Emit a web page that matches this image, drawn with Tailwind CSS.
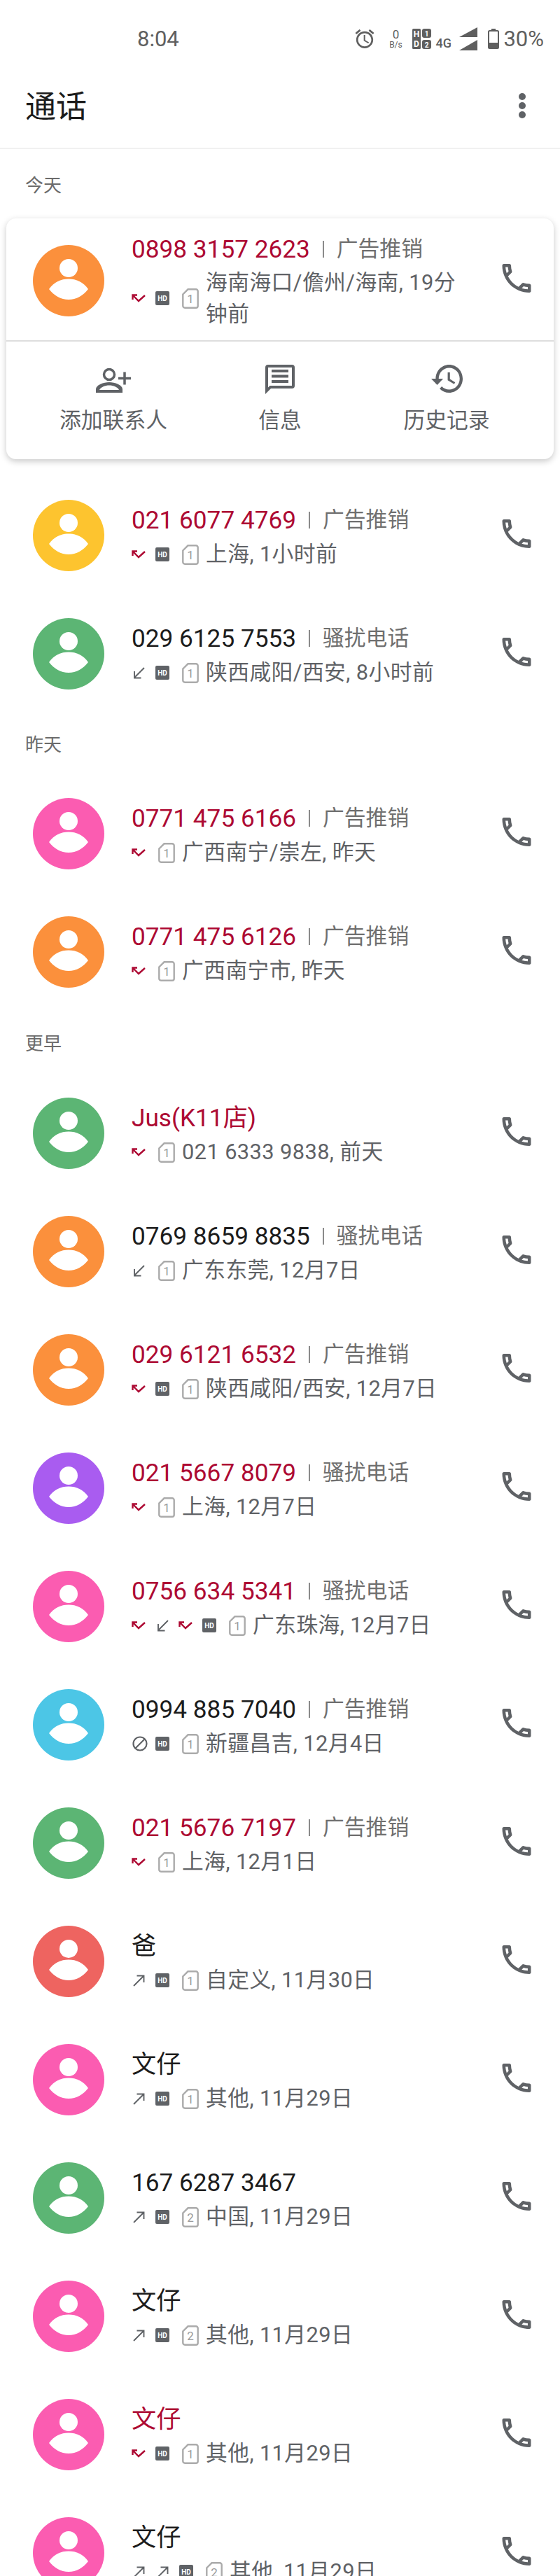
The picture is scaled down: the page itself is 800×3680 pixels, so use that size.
<!DOCTYPE html>
<html lang="zh">
<head>
<meta charset="utf-8">
<script src="https://cdn.jsdelivr.net/npm/@tailwindcss/browser@4"></script>
<title>通话</title>
</head>
<body class="bg-white">
<svg class="hidden" xmlns="http://www.w3.org/2000/svg">
  <symbol id="avatar" viewBox="0 0 102 102">
    <circle cx="51" cy="51" r="51" fill="currentColor"/>
    <circle cx="51" cy="33" r="13" fill="#fff"/>
    <path d="M23 63C30 53 40 48.500 51 48.500C62 48.500 72 53 79 63C72 72 62 78 51 78C40 78 30 72 23 63Z" fill="#fff"/>
  </symbol>
  <symbol id="phone" viewBox="3 3 18 18">
    <path fill="#5f6266" d="M6.540 5c.06.89.21 1.760.45 2.590l-1.200 1.200c-.41-1.200-.67-2.470-.76-3.790h1.510m9.860 12.020c.85.24 1.720.39 2.600.45v1.490c-1.320-.09-2.590-.35-3.800-.75l1.200-1.190M7.500 3H4c-.55 0-1 .45-1 1 0 9.390 7.610 17 17 17 .55 0 1-.45 1-1v-3.490c0-.55-.45-1-1-1-1.240 0-2.450-.2-3.570-.57-.1-.04-.21-.05-.31-.05-.26 0-.51.1-.71.29l-2.200 2.200c-2.830-1.450-5.150-3.760-6.590-6.590l2.200-2.200c.28-.28.36-.67.25-1.020C8.700 6.450 8.500 5.250 8.500 4c0-.55-.45-1-1-1z"/>
  </symbol>
  <symbol id="missed" viewBox="0 0 20 12">
    <path d="M1.500 1.500L10 10L19 2M1.500 8V1.500H8" fill="none" stroke="#ad0a33" stroke-width="2.400"/>
  </symbol>
  <symbol id="incoming" viewBox="0 0 17 17">
    <path d="M16 1L2 15M2 6V15.500H11.500" fill="none" stroke="#5f6266" stroke-width="1.900"/>
  </symbol>
  <symbol id="outgoing" viewBox="0 0 17 17">
    <path d="M1 16L15 2M5.500 1.500H15.500V11" fill="none" stroke="#5f6266" stroke-width="1.900"/>
  </symbol>
  <symbol id="blocked" viewBox="0 0 22 22">
    <circle cx="11" cy="11" r="9.500" fill="none" stroke="#5f6266" stroke-width="2.200"/>
    <path d="M4.500 17.500L17.500 4.500" stroke="#5f6266" stroke-width="2.200"/>
  </symbol>
  <symbol id="hd" viewBox="0 0 20 20">
    <rect width="20" height="20" rx="2" fill="#5f6266"/>
    <text x="10" y="13.500" text-anchor="middle" font-family="Roboto" font-size="10" font-weight="700" fill="#fff">HD</text>
  </symbol>
  <symbol id="sim1" viewBox="0 0 24 29">
    <path d="M8.500 1.300H20a2.700 2.700 0 0 1 2.700 2.700V25a2.700 2.700 0 0 1-2.700 2.700H4A2.700 2.700 0 0 1 1.300 25V8.500Z" fill="none" stroke="#ababab" stroke-width="2.400"/>
    <text x="12" y="21" text-anchor="middle" font-family="Roboto" font-size="17" fill="#9a9a9a">1</text>
  </symbol>
  <symbol id="sim2" viewBox="0 0 24 29">
    <path d="M8.500 1.300H20a2.700 2.700 0 0 1 2.700 2.700V25a2.700 2.700 0 0 1-2.700 2.700H4A2.700 2.700 0 0 1 1.300 25V8.500Z" fill="none" stroke="#ababab" stroke-width="2.400"/>
    <text x="12" y="21" text-anchor="middle" font-family="Roboto" font-size="17" fill="#9a9a9a">2</text>
  </symbol>
</svg>

<div class="w-[800px] h-[3680px] overflow-hidden bg-white font-[Roboto,'Noto_Sans_CJK_SC',sans-serif] text-[#1c1c1c]">

  <!-- status bar -->
  <div class="h-[88px] flex items-center pt-[22px] pl-[196px] pr-[23px] text-[#5f5f5f]">
    <span class="text-[31px] leading-none">8:04</span>
    <div class="ml-auto flex items-center">
      <svg class="w-[28px] h-[27px]" viewBox="2 2 20 20"><path fill="#5f5f5f" d="M22 5.720l-4.600-3.860-1.290 1.530 4.600 3.860L22 5.720zM7.880 3.390L6.600 1.860 2 5.710l1.290 1.530 4.590-3.850zM12.500 8H11v6l4.750 2.850.75-1.230-4-2.370V8zM12 4c-4.970 0-9 4.030-9 9s4.030 9 9 9 9-4.030 9-9-4.030-9-9-9zm0 16c-3.870 0-7-3.130-7-7s3.130-7 7-7 7 3.130 7 7-3.130 7-7 7z"/></svg>
      <div class="ml-[20px] w-[20px] flex flex-col items-center">
        <span class="text-[17px] leading-[18px]">0</span>
        <span class="text-[12px] leading-[13px]">B/s</span>
      </div>
      <svg class="ml-[14px] w-[27px] h-[29px]" viewBox="0 0 27 29">
        <rect x="0" y="0" width="12" height="29" rx="1.500" fill="#5f5f5f"/>
        <rect x="14" y="0" width="13" height="13" rx="3" fill="#5f5f5f"/>
        <rect x="14" y="16" width="13" height="13" rx="3" fill="#5f5f5f"/>
        <text x="6" y="11.500" text-anchor="middle" font-family="Roboto" font-size="12" font-weight="700" fill="#fff">H</text>
        <text x="6" y="25.500" text-anchor="middle" font-family="Roboto" font-size="12" font-weight="700" fill="#fff">D</text>
        <text x="20.500" y="10.500" text-anchor="middle" font-family="Roboto" font-size="10" font-weight="700" fill="#fff">1</text>
        <text x="20.500" y="26.500" text-anchor="middle" font-family="Roboto" font-size="10" font-weight="700" fill="#fff">2</text>
      </svg>
      <span class="ml-[6px] mt-[14px] w-[24px] text-[18px] leading-none font-medium">4G</span>
      <svg class="ml-[10px] w-[26px] h-[33px]" viewBox="0 0 26 33">
        <path d="M26 0V14H0Z" fill="#5f5f5f"/>
        <path d="M26 18V33H0Z" fill="#5f5f5f"/>
      </svg>
      <svg class="ml-[15px] w-[16px] h-[29px]" viewBox="0 0 16 29">
        <rect x="5" y="0" width="6" height="3" fill="#5f5f5f"/>
        <rect x="1" y="3" width="14" height="25" rx="1.500" fill="none" stroke="#5f5f5f" stroke-width="2"/>
        <rect x="1" y="20" width="14" height="8" fill="#5f5f5f"/>
      </svg>
      <span class="ml-[6px] text-[31px] leading-none">30%</span>
    </div>
  </div>

  <!-- header -->
  <div class="h-[125px] flex items-center justify-between pl-[36px] pr-[49px] rounded-t-[8px] border-b-2 border-[#f1f1f1]">
    <span class="mt-[6px] text-[44px] leading-none">通话</span>
    <div class="mt-[2px] flex flex-col gap-[3px]">
      <span class="w-[10px] h-[10px] rounded-full bg-[#5f6266]"></span>
      <span class="w-[10px] h-[10px] rounded-full bg-[#5f6266]"></span>
      <span class="w-[10px] h-[10px] rounded-full bg-[#5f6266]"></span>
    </div>
  </div>

  <!-- today -->
  <div class="h-[99px] flex items-center pt-[5px] pl-[36px] text-[26px] text-[#6b6b6b]">今天</div>

  <!-- expanded card -->
  <div class="mx-[9px] h-[344px] rounded-[14px] bg-white shadow-[0_3px_10px_rgba(0,0,0,0.22)]">
    <div class="h-[176px] flex items-center pl-[38px] pr-[32px] pt-1 border-b-2 border-[#dedede]">
      <svg class="w-[102px] h-[102px] shrink-0 text-[#fb903c]"><use href="#avatar"/></svg>
      <div class="ml-[39px] flex-1 min-w-0">
        <div class="h-[50px] flex items-center">
          <span class="text-[35.200px] text-[#ad0a33]">0898 3157 2623</span>
          <span class="mx-[18px] w-[2px] h-[24px] bg-[#8a8a8a]"></span>
          <span class="text-[30.800px] text-[#6f6f6f]">广告推销</span>
        </div>
        <div class="flex items-center">
          <svg class="w-[20px] h-[12px] mr-[14px] shrink-0"><use href="#missed"/></svg>
          <svg class="w-[20px] h-[20px] mr-[14px] shrink-0"><use href="#hd"/></svg>
          <svg class="w-[24px] h-[29px] ml-[4px] mr-[10px] shrink-0"><use href="#sim1"/></svg>
          <span class="w-[375px] text-[30.800px] tracking-[0.4px] leading-[45px] text-[#5f6266]">海南海口/儋州/海南, 19分钟前</span>
        </div>
      </div>
      <svg class="w-[42px] h-[41px] shrink-0 mb-2"><use href="#phone"/></svg>
    </div>
    <div class="flex justify-center pt-[33px]">
      <div class="w-[238px] flex flex-col items-center">
        <svg class="w-[52px] h-[36px] mt-[5px] mb-[1px] -ml-[1px]" viewBox="0 0 52 36">
          <circle cx="20" cy="9" r="7.500" fill="none" stroke="#5f6266" stroke-width="3.500"/>
          <path fill="#5f6266" d="M1 35V30C1 24 12 20 20 20C28 20 39 24 39 30V35Z"/>
          <path fill="#fff" d="M6 31C8 27 14 24.500 20 24.500C26 24.500 32 27 34 31Z"/>
          <path stroke="#5f6266" stroke-width="3.500" d="M33 14.500H51M42 5.500V23.500"/>
        </svg>
        <span class="mt-[18px] text-[30.800px] leading-[40px] text-[#5f6266]">添加联系人</span>
      </div>
      <div class="w-[238px] flex flex-col items-center">
        <svg class="w-[42px] h-[42px]" viewBox="0 0 42 42">
          <path fill="#5f6266" d="M4 0H38A4 4 0 0 1 42 4V30A4 4 0 0 1 38 34H8L0 42V4A4 4 0 0 1 4 0Z"/>
          <path fill="#fff" d="M4 4H38V30H6.500L4 32.500Z"/>
          <path fill="#5f6266" d="M9 7H33V11H9ZM9 14.500H33V18.500H9ZM9 22H33V26H9Z"/>
        </svg>
        <span class="mt-[18px] text-[30.800px] leading-[40px] text-[#5f6266]">信息</span>
      </div>
      <div class="w-[238px] flex flex-col items-center">
        <svg class="w-[45px] h-[40px] mb-[2px]" viewBox="1 3 21 18" preserveAspectRatio="none"><path fill="#5f6266" d="M13 3c-4.970 0-9 4.030-9 9H1l3.890 3.890.07.14L9 12H6c0-3.870 3.130-7 7-7s7 3.130 7 7-3.130 7-7 7c-1.930 0-3.680-.79-4.940-2.060l-1.420 1.420C8.270 19.990 10.510 21 13 21c4.970 0 9-4.030 9-9s-4.030-9-9-9zm-1 5v5l4.280 2.540.72-1.210-3.500-2.080V8H12z"/></svg>
        <span class="mt-[18px] text-[30.800px] leading-[40px] text-[#5f6266]">历史记录</span>
      </div>
    </div>
  </div>

  <div class="mt-[24px]">
    <!-- row -->
    <div class="h-[169px] flex items-center pl-[47px] pr-[41px]">
      <svg class="w-[102px] h-[102px] shrink-0 text-[#fdc42f]"><use href="#avatar"/></svg>
      <div class="ml-[39px] mt-[6px] flex-1 min-w-0">
        <div class="h-[49px] flex items-center"><span class="text-[35.200px] text-[#ad0a33]">021 6077 4769</span><span class="mx-[18px] w-[2px] h-[24px] bg-[#8a8a8a]"></span><span class="text-[30.800px] text-[#6f6f6f]">广告推销</span></div>
        <div class="h-[49px] flex items-center"><svg class="w-[20px] h-[12px] mr-[14px]"><use href="#missed"/></svg><svg class="w-[20px] h-[20px] mr-[14px]"><use href="#hd"/></svg><svg class="w-[24px] h-[29px] ml-[4px] mr-[10px]"><use href="#sim1"/></svg><span class="text-[30.800px] tracking-[0.4px] text-[#5f6266]">上海, 1小时前</span></div>
      </div>
      <svg class="w-[42px] h-[41px] shrink-0 mb-1"><use href="#phone"/></svg>
    </div>
    <div class="h-[169px] flex items-center pl-[47px] pr-[41px]">
      <svg class="w-[102px] h-[102px] shrink-0 text-[#5cb574]"><use href="#avatar"/></svg>
      <div class="ml-[39px] mt-[6px] flex-1 min-w-0">
        <div class="h-[49px] flex items-center"><span class="text-[35.200px] text-[#1c1c1c]">029 6125 7553</span><span class="mx-[18px] w-[2px] h-[24px] bg-[#8a8a8a]"></span><span class="text-[30.800px] text-[#6f6f6f]">骚扰电话</span></div>
        <div class="h-[49px] flex items-center"><svg class="w-[17px] h-[17px] ml-[2px] mr-[15px]"><use href="#incoming"/></svg><svg class="w-[20px] h-[20px] mr-[14px]"><use href="#hd"/></svg><svg class="w-[24px] h-[29px] ml-[4px] mr-[10px]"><use href="#sim1"/></svg><span class="text-[30.800px] tracking-[0.4px] text-[#5f6266]">陕西咸阳/西安, 8小时前</span></div>
      </div>
      <svg class="w-[42px] h-[41px] shrink-0 mb-1"><use href="#phone"/></svg>
    </div>
  </div>

  <!-- yesterday -->
  <div class="h-[88px] flex items-center pt-[4px] pl-[36px] text-[26px] text-[#6b6b6b]">昨天</div>

  <div class="h-[169px] flex items-center pl-[47px] pr-[41px]">
    <svg class="w-[102px] h-[102px] shrink-0 text-[#fb5cb1]"><use href="#avatar"/></svg>
    <div class="ml-[39px] mt-[6px] flex-1 min-w-0">
      <div class="h-[49px] flex items-center"><span class="text-[35.200px] text-[#ad0a33]">0771 475 6166</span><span class="mx-[18px] w-[2px] h-[24px] bg-[#8a8a8a]"></span><span class="text-[30.800px] text-[#6f6f6f]">广告推销</span></div>
      <div class="h-[49px] flex items-center"><svg class="w-[20px] h-[12px] mr-[14px]"><use href="#missed"/></svg><svg class="w-[24px] h-[29px] ml-[4px] mr-[10px]"><use href="#sim1"/></svg><span class="text-[30.800px] tracking-[0.4px] text-[#5f6266]">广西南宁/崇左, 昨天</span></div>
    </div>
    <svg class="w-[42px] h-[41px] shrink-0 mb-1"><use href="#phone"/></svg>
  </div>
  <div class="h-[169px] flex items-center pl-[47px] pr-[41px]">
    <svg class="w-[102px] h-[102px] shrink-0 text-[#fb903c]"><use href="#avatar"/></svg>
    <div class="ml-[39px] mt-[6px] flex-1 min-w-0">
      <div class="h-[49px] flex items-center"><span class="text-[35.200px] text-[#ad0a33]">0771 475 6126</span><span class="mx-[18px] w-[2px] h-[24px] bg-[#8a8a8a]"></span><span class="text-[30.800px] text-[#6f6f6f]">广告推销</span></div>
      <div class="h-[49px] flex items-center"><svg class="w-[20px] h-[12px] mr-[14px]"><use href="#missed"/></svg><svg class="w-[24px] h-[29px] ml-[4px] mr-[10px]"><use href="#sim1"/></svg><span class="text-[30.800px] tracking-[0.4px] text-[#5f6266]">广西南宁市, 昨天</span></div>
    </div>
    <svg class="w-[42px] h-[41px] shrink-0 mb-1"><use href="#phone"/></svg>
  </div>

  <!-- earlier -->
  <div class="h-[90px] flex items-center pt-[4px] pl-[36px] text-[26px] text-[#6b6b6b]">更早</div>

  <div class="h-[169px] flex items-center pl-[47px] pr-[41px]">
    <svg class="w-[102px] h-[102px] shrink-0 text-[#5cb574]"><use href="#avatar"/></svg>
    <div class="ml-[39px] mt-[6px] flex-1 min-w-0">
      <div class="h-[49px] flex items-center"><span class="text-[35.200px] text-[#ad0a33]">Jus(K11店)</span></div>
      <div class="h-[49px] flex items-center"><svg class="w-[20px] h-[12px] mr-[14px]"><use href="#missed"/></svg><svg class="w-[24px] h-[29px] ml-[4px] mr-[10px]"><use href="#sim1"/></svg><span class="text-[30.800px] tracking-[0.4px] text-[#5f6266]">021 6333 9838, 前天</span></div>
    </div>
    <svg class="w-[42px] h-[41px] shrink-0 mb-1"><use href="#phone"/></svg>
  </div>
  <div class="h-[169px] flex items-center pl-[47px] pr-[41px]">
    <svg class="w-[102px] h-[102px] shrink-0 text-[#fb903c]"><use href="#avatar"/></svg>
    <div class="ml-[39px] mt-[6px] flex-1 min-w-0">
      <div class="h-[49px] flex items-center"><span class="text-[35.200px] text-[#1c1c1c]">0769 8659 8835</span><span class="mx-[18px] w-[2px] h-[24px] bg-[#8a8a8a]"></span><span class="text-[30.800px] text-[#6f6f6f]">骚扰电话</span></div>
      <div class="h-[49px] flex items-center"><svg class="w-[17px] h-[17px] ml-[2px] mr-[15px]"><use href="#incoming"/></svg><svg class="w-[24px] h-[29px] ml-[4px] mr-[10px]"><use href="#sim1"/></svg><span class="text-[30.800px] tracking-[0.4px] text-[#5f6266]">广东东莞, 12月7日</span></div>
    </div>
    <svg class="w-[42px] h-[41px] shrink-0 mb-1"><use href="#phone"/></svg>
  </div>
  <div class="h-[169px] flex items-center pl-[47px] pr-[41px]">
    <svg class="w-[102px] h-[102px] shrink-0 text-[#fb903c]"><use href="#avatar"/></svg>
    <div class="ml-[39px] mt-[6px] flex-1 min-w-0">
      <div class="h-[49px] flex items-center"><span class="text-[35.200px] text-[#ad0a33]">029 6121 6532</span><span class="mx-[18px] w-[2px] h-[24px] bg-[#8a8a8a]"></span><span class="text-[30.800px] text-[#6f6f6f]">广告推销</span></div>
      <div class="h-[49px] flex items-center"><svg class="w-[20px] h-[12px] mr-[14px]"><use href="#missed"/></svg><svg class="w-[20px] h-[20px] mr-[14px]"><use href="#hd"/></svg><svg class="w-[24px] h-[29px] ml-[4px] mr-[10px]"><use href="#sim1"/></svg><span class="text-[30.800px] tracking-[0.4px] text-[#5f6266]">陕西咸阳/西安, 12月7日</span></div>
    </div>
    <svg class="w-[42px] h-[41px] shrink-0 mb-1"><use href="#phone"/></svg>
  </div>
  <div class="h-[169px] flex items-center pl-[47px] pr-[41px]">
    <svg class="w-[102px] h-[102px] shrink-0 text-[#a95cf0]"><use href="#avatar"/></svg>
    <div class="ml-[39px] mt-[6px] flex-1 min-w-0">
      <div class="h-[49px] flex items-center"><span class="text-[35.200px] text-[#ad0a33]">021 5667 8079</span><span class="mx-[18px] w-[2px] h-[24px] bg-[#8a8a8a]"></span><span class="text-[30.800px] text-[#6f6f6f]">骚扰电话</span></div>
      <div class="h-[49px] flex items-center"><svg class="w-[20px] h-[12px] mr-[14px]"><use href="#missed"/></svg><svg class="w-[24px] h-[29px] ml-[4px] mr-[10px]"><use href="#sim1"/></svg><span class="text-[30.800px] tracking-[0.4px] text-[#5f6266]">上海, 12月7日</span></div>
    </div>
    <svg class="w-[42px] h-[41px] shrink-0 mb-1"><use href="#phone"/></svg>
  </div>
  <div class="h-[169px] flex items-center pl-[47px] pr-[41px]">
    <svg class="w-[102px] h-[102px] shrink-0 text-[#fb5cb1]"><use href="#avatar"/></svg>
    <div class="ml-[39px] mt-[6px] flex-1 min-w-0">
      <div class="h-[49px] flex items-center"><span class="text-[35.200px] text-[#ad0a33]">0756 634 5341</span><span class="mx-[18px] w-[2px] h-[24px] bg-[#8a8a8a]"></span><span class="text-[30.800px] text-[#6f6f6f]">骚扰电话</span></div>
      <div class="h-[49px] flex items-center"><svg class="w-[20px] h-[12px] mr-[16px]"><use href="#missed"/></svg><svg class="w-[17px] h-[17px] mr-[14px]"><use href="#incoming"/></svg><svg class="w-[20px] h-[12px] mr-[14px]"><use href="#missed"/></svg><svg class="w-[20px] h-[20px] mr-[14px]"><use href="#hd"/></svg><svg class="w-[24px] h-[29px] ml-[4px] mr-[10px]"><use href="#sim1"/></svg><span class="text-[30.800px] tracking-[0.4px] text-[#5f6266]">广东珠海, 12月7日</span></div>
    </div>
    <svg class="w-[42px] h-[41px] shrink-0 mb-1"><use href="#phone"/></svg>
  </div>
  <div class="h-[169px] flex items-center pl-[47px] pr-[41px]">
    <svg class="w-[102px] h-[102px] shrink-0 text-[#4cc6e6]"><use href="#avatar"/></svg>
    <div class="ml-[39px] mt-[6px] flex-1 min-w-0">
      <div class="h-[49px] flex items-center"><span class="text-[35.200px] text-[#1c1c1c]">0994 885 7040</span><span class="mx-[18px] w-[2px] h-[24px] bg-[#8a8a8a]"></span><span class="text-[30.800px] text-[#6f6f6f]">广告推销</span></div>
      <div class="h-[49px] flex items-center"><svg class="w-[22px] h-[22px] ml-[1px] mr-[11px]"><use href="#blocked"/></svg><svg class="w-[20px] h-[20px] mr-[14px]"><use href="#hd"/></svg><svg class="w-[24px] h-[29px] ml-[4px] mr-[10px]"><use href="#sim1"/></svg><span class="text-[30.800px] tracking-[0.4px] text-[#5f6266]">新疆昌吉, 12月4日</span></div>
    </div>
    <svg class="w-[42px] h-[41px] shrink-0 mb-1"><use href="#phone"/></svg>
  </div>
  <div class="h-[169px] flex items-center pl-[47px] pr-[41px]">
    <svg class="w-[102px] h-[102px] shrink-0 text-[#5cb574]"><use href="#avatar"/></svg>
    <div class="ml-[39px] mt-[6px] flex-1 min-w-0">
      <div class="h-[49px] flex items-center"><span class="text-[35.200px] text-[#ad0a33]">021 5676 7197</span><span class="mx-[18px] w-[2px] h-[24px] bg-[#8a8a8a]"></span><span class="text-[30.800px] text-[#6f6f6f]">广告推销</span></div>
      <div class="h-[49px] flex items-center"><svg class="w-[20px] h-[12px] mr-[14px]"><use href="#missed"/></svg><svg class="w-[24px] h-[29px] ml-[4px] mr-[10px]"><use href="#sim1"/></svg><span class="text-[30.800px] tracking-[0.4px] text-[#5f6266]">上海, 12月1日</span></div>
    </div>
    <svg class="w-[42px] h-[41px] shrink-0 mb-1"><use href="#phone"/></svg>
  </div>
  <div class="h-[169px] flex items-center pl-[47px] pr-[41px]">
    <svg class="w-[102px] h-[102px] shrink-0 text-[#ee6460]"><use href="#avatar"/></svg>
    <div class="ml-[39px] mt-[6px] flex-1 min-w-0">
      <div class="h-[49px] flex items-center"><span class="text-[35.200px] text-[#1c1c1c]">爸</span></div>
      <div class="h-[49px] flex items-center"><svg class="w-[17px] h-[17px] ml-[2px] mr-[15px]"><use href="#outgoing"/></svg><svg class="w-[20px] h-[20px] mr-[14px]"><use href="#hd"/></svg><svg class="w-[24px] h-[29px] ml-[4px] mr-[10px]"><use href="#sim1"/></svg><span class="text-[30.800px] tracking-[0.4px] text-[#5f6266]">自定义, 11月30日</span></div>
    </div>
    <svg class="w-[42px] h-[41px] shrink-0 mb-1"><use href="#phone"/></svg>
  </div>
  <div class="h-[169px] flex items-center pl-[47px] pr-[41px]">
    <svg class="w-[102px] h-[102px] shrink-0 text-[#fb5cb1]"><use href="#avatar"/></svg>
    <div class="ml-[39px] mt-[6px] flex-1 min-w-0">
      <div class="h-[49px] flex items-center"><span class="text-[35.200px] text-[#1c1c1c]">文仔</span></div>
      <div class="h-[49px] flex items-center"><svg class="w-[17px] h-[17px] ml-[2px] mr-[15px]"><use href="#outgoing"/></svg><svg class="w-[20px] h-[20px] mr-[14px]"><use href="#hd"/></svg><svg class="w-[24px] h-[29px] ml-[4px] mr-[10px]"><use href="#sim1"/></svg><span class="text-[30.800px] tracking-[0.4px] text-[#5f6266]">其他, 11月29日</span></div>
    </div>
    <svg class="w-[42px] h-[41px] shrink-0 mb-1"><use href="#phone"/></svg>
  </div>
  <div class="h-[169px] flex items-center pl-[47px] pr-[41px]">
    <svg class="w-[102px] h-[102px] shrink-0 text-[#5cb574]"><use href="#avatar"/></svg>
    <div class="ml-[39px] mt-[6px] flex-1 min-w-0">
      <div class="h-[49px] flex items-center"><span class="text-[35.200px] text-[#1c1c1c]">167 6287 3467</span></div>
      <div class="h-[49px] flex items-center"><svg class="w-[17px] h-[17px] ml-[2px] mr-[15px]"><use href="#outgoing"/></svg><svg class="w-[20px] h-[20px] mr-[14px]"><use href="#hd"/></svg><svg class="w-[24px] h-[29px] ml-[4px] mr-[10px]"><use href="#sim2"/></svg><span class="text-[30.800px] tracking-[0.4px] text-[#5f6266]">中国, 11月29日</span></div>
    </div>
    <svg class="w-[42px] h-[41px] shrink-0 mb-1"><use href="#phone"/></svg>
  </div>
  <div class="h-[169px] flex items-center pl-[47px] pr-[41px]">
    <svg class="w-[102px] h-[102px] shrink-0 text-[#fb5cb1]"><use href="#avatar"/></svg>
    <div class="ml-[39px] mt-[6px] flex-1 min-w-0">
      <div class="h-[49px] flex items-center"><span class="text-[35.200px] text-[#1c1c1c]">文仔</span></div>
      <div class="h-[49px] flex items-center"><svg class="w-[17px] h-[17px] ml-[2px] mr-[15px]"><use href="#outgoing"/></svg><svg class="w-[20px] h-[20px] mr-[14px]"><use href="#hd"/></svg><svg class="w-[24px] h-[29px] ml-[4px] mr-[10px]"><use href="#sim2"/></svg><span class="text-[30.800px] tracking-[0.4px] text-[#5f6266]">其他, 11月29日</span></div>
    </div>
    <svg class="w-[42px] h-[41px] shrink-0 mb-1"><use href="#phone"/></svg>
  </div>
  <div class="h-[169px] flex items-center pl-[47px] pr-[41px]">
    <svg class="w-[102px] h-[102px] shrink-0 text-[#fb5cb1]"><use href="#avatar"/></svg>
    <div class="ml-[39px] mt-[6px] flex-1 min-w-0">
      <div class="h-[49px] flex items-center"><span class="text-[35.200px] text-[#ad0a33]">文仔</span></div>
      <div class="h-[49px] flex items-center"><svg class="w-[20px] h-[12px] mr-[14px]"><use href="#missed"/></svg><svg class="w-[20px] h-[20px] mr-[14px]"><use href="#hd"/></svg><svg class="w-[24px] h-[29px] ml-[4px] mr-[10px]"><use href="#sim1"/></svg><span class="text-[30.800px] tracking-[0.4px] text-[#5f6266]">其他, 11月29日</span></div>
    </div>
    <svg class="w-[42px] h-[41px] shrink-0 mb-1"><use href="#phone"/></svg>
  </div>
  <div class="h-[169px] flex items-center pl-[47px] pr-[41px]">
    <svg class="w-[102px] h-[102px] shrink-0 text-[#fb5cb1]"><use href="#avatar"/></svg>
    <div class="ml-[39px] mt-[6px] flex-1 min-w-0">
      <div class="h-[49px] flex items-center"><span class="text-[35.200px] text-[#1c1c1c]">文仔</span></div>
      <div class="h-[49px] flex items-center"><svg class="w-[17px] h-[17px] ml-[2px] mr-[15px]"><use href="#outgoing"/></svg><svg class="w-[17px] h-[17px] ml-[2px] mr-[15px]"><use href="#outgoing"/></svg><svg class="w-[20px] h-[20px] mr-[14px]"><use href="#hd"/></svg><svg class="w-[24px] h-[29px] ml-[4px] mr-[10px]"><use href="#sim2"/></svg><span class="text-[30.800px] tracking-[0.4px] text-[#5f6266]">其他, 11月29日</span></div>
    </div>
    <svg class="w-[42px] h-[41px] shrink-0 mb-1"><use href="#phone"/></svg>
  </div>
</div>
</body>
</html>
